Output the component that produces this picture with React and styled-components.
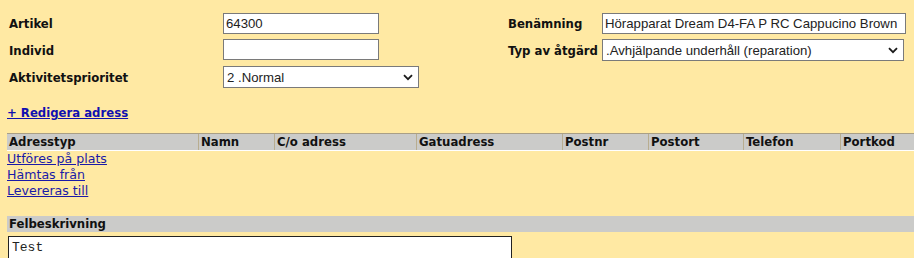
import React from 'react';
import styled, { createGlobalStyle } from 'styled-components';

const GlobalStyle = createGlobalStyle`
    body {
        margin: 0;
        background-color: #ffe9a3;
        font-family: "DejaVu Sans Condensed", "DejaVu Sans", Verdana, sans-serif;
        font-stretch: condensed;
        color: #111;
    }
`;

const Page = styled.div`
    padding: 13px 0 0 7px;
    width: 907px;
    height: 245px;
    overflow: hidden;
`;

const FormGrid = styled.div`
    display: grid;
    grid-template-columns: 214px 285px 94px 304px;
    grid-auto-rows: auto;
    row-gap: 5px;
    padding-left: 2px;
`;

const Label = styled.label`
    display: flex;
    align-items: center;
    font-weight: bold;
    font-size: 13px;
    white-space: nowrap;
`;

const TextInput = styled.input`
    box-sizing: border-box;
    width: ${(p) => p.$width}px;
    height: 21px;
    margin: 0;
    padding: 1px 2px;
    border: 1px solid #7a7a7a;
    background: #fff;
    font-family: "Liberation Sans", Arial, sans-serif;
    font-size: 13.2px;
    color: #222;
    outline: none;
`;

const SelectWrap = styled.div`
    position: relative;
    width: ${(p) => p.$width}px;
    height: 22px;
`;

const Select = styled.select`
    appearance: none;
    box-sizing: border-box;
    width: 100%;
    height: 100%;
    margin: 0;
    padding: 0 20px 0 3px;
    border: 1px solid #7a7a7a;
    border-radius: 0;
    background: #fff;
    font-family: "Liberation Sans", Arial, sans-serif;
    font-size: 13.2px;
    color: #222;
    outline: none;
`;

const Chevron = styled.svg`
    position: absolute;
    right: 6px;
    top: 8px;
    pointer-events: none;
`;

const EditLink = styled.a`
    display: inline-block;
    margin-top: 17px;
    font-weight: bold;
    font-size: 13px;
    color: #1010b0;
    text-decoration: underline;
    cursor: pointer;
`;

const cols = '191px 76px 142px 146px 86px 95px 97px 1fr';

const AddressTable = styled.div`
    margin-top: 12px;
`;

const HeadRow = styled.div`
    display: grid;
    grid-template-columns: ${cols};
    height: 16px;
    background: #cbcbc9;
    border-top: 1px solid #a99f86;
    border-bottom: 1px solid #fff;
`;

const HeadCell = styled.div`
    padding-left: 2px;
    font-weight: bold;
    font-size: 13px;
    line-height: 16px;
    border-left: ${(p) => (p.$first ? 'none' : '1px solid #b8ad90')};
    white-space: nowrap;
    overflow: hidden;
`;

const BodyRow = styled.div`
    display: grid;
    grid-template-columns: ${cols};
    height: 16px;
`;

const RowCell = styled.div`
    padding-top: 1px;
`;

const RowLink = styled.a`
    display: inline-block;
    vertical-align: top;
    font-family: "DejaVu Sans", Verdana, sans-serif;
    font-stretch: normal;
    font-size: 12.6px;
    line-height: 14px;
    color: #1a1aa8;
    text-decoration: underline;
    cursor: pointer;
    white-space: nowrap;
`;

const SectionHead = styled.div`
    margin-top: 17px;
    height: 16px;
    padding-left: 2px;
    background: #cbcbc9;
    font-weight: bold;
    font-size: 13px;
    line-height: 16px;
`;

const Description = styled.textarea`
    display: block;
    box-sizing: border-box;
    width: 504px;
    height: 60px;
    margin: 4px 0 0 1px;
    padding: 3px 3px;
    border: 1px solid #222;
    background: #fff;
    font-family: "Liberation Mono", "Courier New", monospace;
    font-size: 13px;
    color: #222;
    resize: none;
    overflow-y: scroll;
    outline: none;
`;

function ChevronIcon() {
    return (
        <Chevron width="10" height="7" viewBox="0 0 10 7">
            <path d="M1 1.2 L5 5.2 L9 1.2" fill="none" stroke="#1a1a1a" strokeWidth="1.8" />
        </Chevron>
    );
}

const headers = ['Adresstyp', 'Namn', 'C/o adress', 'Gatuadress', 'Postnr', 'Postort', 'Telefon', 'Portkod'];
const addressTypes = ['Utföres på plats', 'Hämtas från', 'Levereras till'];

export default function App() {
    return (
        <>
            <GlobalStyle />
            <Page>
                <FormGrid>
                    <Label>Artikel</Label>
                    <div>
                        <TextInput $width={156} defaultValue="64300" />
                    </div>
                    <Label>Benämning</Label>
                    <TextInput $width={304} defaultValue="Hörapparat Dream D4-FA P RC Cappucino Brown" />

                    <Label>Individ</Label>
                    <div>
                        <TextInput $width={156} defaultValue="" />
                    </div>
                    <Label>Typ av åtgärd</Label>
                    <SelectWrap $width={302}>
                        <Select defaultValue="rep">
                            <option value="rep">.Avhjälpande underhåll (reparation)</option>
                        </Select>
                        <ChevronIcon />
                    </SelectWrap>

                    <Label>Aktivitetsprioritet</Label>
                    <SelectWrap $width={196}>
                        <Select defaultValue="2">
                            <option value="1">1 .Hög</option>
                            <option value="2">2 .Normal</option>
                            <option value="3">3 .Låg</option>
                        </Select>
                        <ChevronIcon />
                    </SelectWrap>
                    <div />
                    <div />
                </FormGrid>

                <EditLink>+ Redigera adress</EditLink>

                <AddressTable>
                    <HeadRow>
                        {headers.map((h, i) => (
                            <HeadCell key={h} $first={i === 0}>
                                {h}
                            </HeadCell>
                        ))}
                    </HeadRow>
                    {addressTypes.map((t) => (
                        <BodyRow key={t}>
                            <RowCell>
                                <RowLink>{t}</RowLink>
                            </RowCell>
                        </BodyRow>
                    ))}
                </AddressTable>

                <SectionHead>Felbeskrivning</SectionHead>
                <Description defaultValue="Test" />
            </Page>
        </>
    );
}
